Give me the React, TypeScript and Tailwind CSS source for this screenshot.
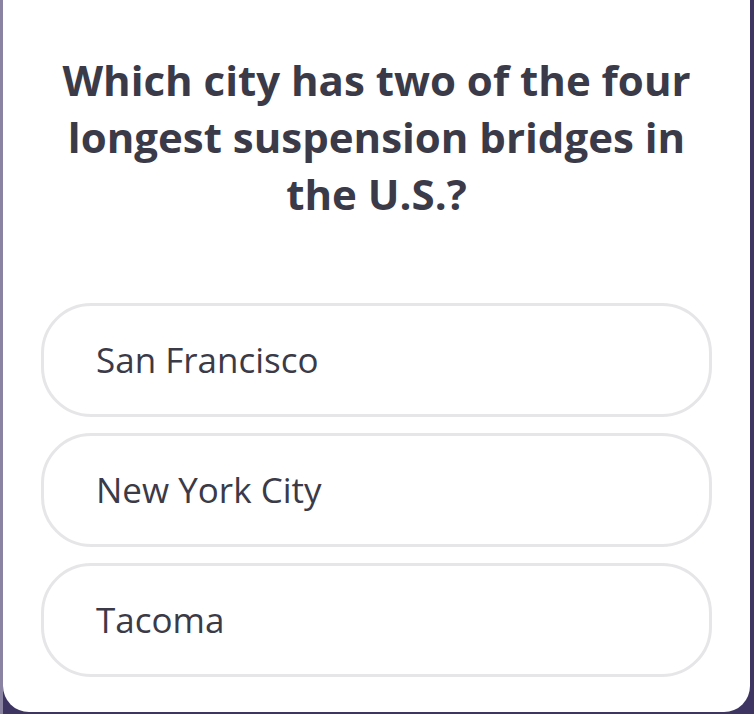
import React from "react";

const options = ["San Francisco", "New York City", "Tacoma"];

export default function App() {
  return (
    <div className="w-[754px] h-[714px] bg-[#3e3563] flex overflow-hidden">
      <div className="w-[3px] h-full bg-[#8a84a2]" />
      <div
        className="w-[747px] h-[712px] bg-white rounded-b-[26px] flex flex-col items-center"
        style={{ fontFamily: "'Open Sans', 'Noto Sans', sans-serif" }}
      >
        <h1 className="mt-[51px] w-[700px] text-center text-[42px] leading-[57px] font-bold text-[#3a3a48]">
          Which city has two of the four
          <br />
          longest suspension bridges in
          <br />
          the U.S.?
        </h1>
        <div className="mt-[81px] flex flex-col gap-[16px] w-[671px]">
          {options.map((o) => (
            <div
              key={o}
              className="h-[114px] rounded-[50px] border-[3px] border-[#e6e6e8] flex items-center pl-[52px] text-[35px] font-medium text-[#3a3a48]"
            >
              {o}
            </div>
          ))}
        </div>
      </div>
    </div>
  );
}
